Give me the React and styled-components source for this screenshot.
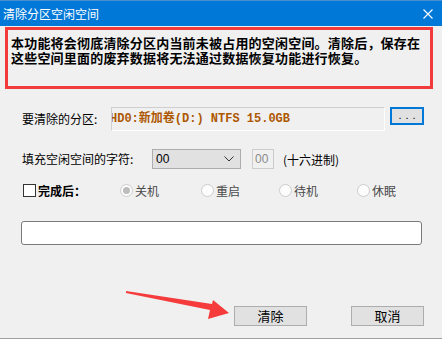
import React from "react";
import styled, { createGlobalStyle } from "styled-components";

const Global = createGlobalStyle`
  html, body { margin: 0; padding: 0; background: #f0f0f0; }
  body { font-family: "Noto Sans CJK SC", "Liberation Sans", sans-serif; }
  * { box-sizing: border-box; }
`;

const Window = styled.div`
  position: relative;
  width: 442px;
  height: 339px;
  background: #f0f0f0;
  border-bottom: 1px solid #a0a0a0;
  display: flex;
  flex-direction: column;
  overflow: hidden;
`;

const TitleBar = styled.div`
  height: 26px;
  flex: none;
  background: #0078d7;
  border-top: 1px solid #4a8fd0;
  display: flex;
  align-items: center;
  justify-content: space-between;
  padding: 0 9px 0 3px;
  color: #fff;
  font-size: 12px;
`;

const CloseIcon = styled.svg`
  width: 10px;
  height: 10px;
  margin-top: 1px;
`;

const Notice = styled.div`
  margin: 1px 9px 0 5px;
  height: 62px;
  border: 3px solid #f23a3a;
  padding: 5px 2px 0 3px;
  font-size: 13px;
  font-weight: 700;
  color: #000;
`;

const NoticeLine = styled.div`
  height: 15px;
  line-height: 15px;
  letter-spacing: 0.2px;
  white-space: nowrap;
`;

const Form = styled.div`
  padding: 0 18px 0 22px;
  display: flex;
  flex-direction: column;
`;

const Row = styled.div`
  display: flex;
  align-items: ${(p) => p.$align || "center"};
  margin-top: ${(p) => p.$mt}px;
  height: ${(p) => p.$h}px;
`;

const Label = styled.div`
  width: ${(p) => p.$w}px;
  flex: none;
  font-size: 12px;
  color: #000;
  line-height: ${(p) => p.$lh || 24}px;
`;

const PartitionField = styled.div`
  width: 274px;
  height: 24px;
  border: 1px solid #cfcfcf;
  border-right-color: #fff;
  border-bottom-color: #fff;
  background: #f0f0f0;
  overflow: hidden;
  white-space: nowrap;
  font-family: "Liberation Mono", "Noto Sans CJK SC", monospace;
  font-weight: 700;
  font-size: 12px;
  color: #ad5800;
  line-height: 22px;
  text-indent: -2px;
`;

const DotsButton = styled.div`
  margin-left: 5px;
  width: 34px;
  height: 18px;
  border: 2px solid #0078d7;
  background: #e1e1e1;
  font-family: "Liberation Sans", sans-serif;
  font-size: 11px;
  letter-spacing: 4px;
  text-align: center;
  line-height: 12px;
  padding-left: 4px;
  color: #000;
`;

const Select = styled.div`
  width: 89px;
  height: 20px;
  border: 1px solid #adadad;
  background: #e1e1e1;
  display: flex;
  align-items: center;
  justify-content: space-between;
  padding: 0 6px 0 3px;
  font-family: "Liberation Sans", sans-serif;
  font-size: 12px;
  color: #000;
`;

const HexBox = styled.div`
  margin-left: 11px;
  width: 22px;
  height: 20px;
  border: 1px solid #cccccc;
  background: #f0f0f0;
  font-family: "Liberation Sans", sans-serif;
  font-size: 12px;
  color: #8a8a8a;
  line-height: 18px;
  padding-left: 2px;
`;

const Hint = styled.div`
  margin-left: 9px;
  font-size: 12px;
  color: #000;
`;

const CheckGroup = styled.div`
  width: 98px;
  flex: none;
  display: flex;
  align-items: center;
`;

const CheckBox = styled.div`
  width: 13px;
  height: 13px;
  margin-left: 1px;
  border: 1px solid #333;
  background: #fff;
`;

const CheckLabel = styled.div`
  margin-left: 2px;
  font-size: 12px;
  font-weight: 700;
  color: #000;
`;

const RadioItem = styled.div`
  width: ${(p) => p.$w}px;
  flex: none;
  display: flex;
  align-items: center;
  font-size: 12px;
  color: #4a4a4a;
`;

const RadioCircle = styled.div`
  width: 13px;
  height: 13px;
  border-radius: 50%;
  border: 1px solid #cccccc;
  background: #fcfcfc;
  margin-right: 2px;
  display: flex;
  align-items: center;
  justify-content: center;
  &::after {
    content: "";
    display: ${(p) => (p.$checked ? "block" : "none")};
    width: 7px;
    height: 7px;
    border-radius: 50%;
    background: #bcbcbc;
  }
`;

const Progress = styled.div`
  margin-top: 24px;
  margin-left: -1px;
  width: 401px;
  height: 24px;
  border: 1px solid #7a7a7a;
  border-radius: 3px;
  background: #fff;
`;

const ButtonBar = styled.div`
  margin-top: 61px;
  display: flex;
  justify-content: flex-end;
  gap: 44px;
`;

const Button = styled.div`
  width: 73px;
  height: 20px;
  border: 1px solid #adadad;
  background: #e1e1e1;
  font-size: 13px;
  line-height: 18px;
  text-align: center;
  color: #000;
`;

const Annotation = styled.svg`
  position: absolute;
  left: 0;
  top: 0;
  width: 442px;
  height: 339px;
  pointer-events: none;
`;

export default function App() {
  return (
    <>
      <Global />
      <Window>
        <TitleBar>
          <span>清除分区空闲空间</span>
          <CloseIcon viewBox="0 0 10 10">
            <path d="M0.5 0.5 L9.5 9.5 M9.5 0.5 L0.5 9.5" stroke="#fff" strokeWidth="1.1" fill="none" />
          </CloseIcon>
        </TitleBar>
        <Notice>
          <NoticeLine>本功能将会彻底清除分区内当前未被占用的空闲空间。清除后，保存在</NoticeLine>
          <NoticeLine>这些空间里面的废弃数据将无法通过数据恢复功能进行恢复。</NoticeLine>
        </Notice>
        <Form>
          <Row $mt={18} $h={24} $align="flex-start">
            <Label $w={89}>要清除的分区:</Label>
            <PartitionField>HD0:新加卷(D:) NTFS 15.0GB</PartitionField>
            <DotsButton>...</DotsButton>
          </Row>
          <Row $mt={18} $h={20}>
            <Label $w={130} $lh={20}>填充空闲空间的字符:</Label>
            <Select>
              <span>00</span>
              <svg width="10" height="6" viewBox="0 0 10 6">
                <path d="M0.5 0.5 L5 5 L9.5 0.5" stroke="#333" strokeWidth="1" fill="none" />
              </svg>
            </Select>
            <HexBox>00</HexBox>
            <Hint>(十六进制)</Hint>
          </Row>
          <Row $mt={14} $h={14}>
            <CheckGroup>
              <CheckBox />
              <CheckLabel>完成后：</CheckLabel>
            </CheckGroup>
            <RadioItem $w={81}>
              <RadioCircle $checked />
              关机
            </RadioItem>
            <RadioItem $w={78}>
              <RadioCircle />
              重启
            </RadioItem>
            <RadioItem $w={78}>
              <RadioCircle />
              待机
            </RadioItem>
            <RadioItem $w={60}>
              <RadioCircle />
              休眠
            </RadioItem>
          </Row>
          <Progress />
          <ButtonBar>
            <Button>清除</Button>
            <Button>取消</Button>
          </ButtonBar>
        </Form>
        <Annotation viewBox="0 0 442 339">
          <polygon
            points="126,291 212,304 213,300 229,313 208,319 210,310 126,293"
            fill="#f53b3b"
          />
        </Annotation>
      </Window>
    </>
  );
}
